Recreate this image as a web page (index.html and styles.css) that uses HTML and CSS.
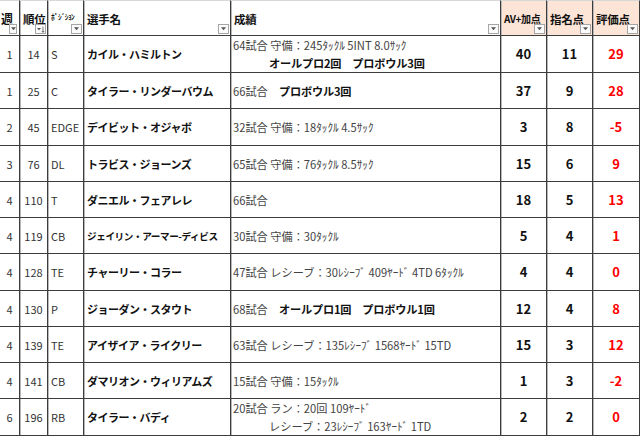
FILE: index.html
```html
<!DOCTYPE html>
<html lang="ja">
<head>
<meta charset="utf-8">
<link rel="stylesheet" href="styles.css">
</head>
<body>
<div class="sheet">
  <div class="c h first">週<span class="dd dd-narrow"><svg viewBox="0 0 6 4"><path d="M0 0H6L3 3.5Z"/></svg></span></div>
  <div class="c h">順位<span class="dd dd-sort"><svg viewBox="0 0 10 8"><path d="M0 2H5L2.5 5Z"/><path d="M7.5 0.5V7.5M6 5.8L7.5 7.5L9 5.8" fill="none" stroke="#333" stroke-width="0.8"/></svg></span></div>
  <div class="c h pos-h">ﾎﾟｼﾞｼｮﾝ<span class="dd"><svg viewBox="0 0 6 4"><path d="M0 0H6L3 3.5Z"/></svg></span></div>
  <div class="c h">選手名<span class="dd"><svg viewBox="0 0 6 4"><path d="M0 0H6L3 3.5Z"/></svg></span></div>
  <div class="c h">成績<span class="dd"><svg viewBox="0 0 6 4"><path d="M0 0H6L3 3.5Z"/></svg></span></div>
  <div class="c h peach small-h">AV+加点<span class="dd"><svg viewBox="0 0 6 4"><path d="M0 0H6L3 3.5Z"/></svg></span></div>
  <div class="c h peach">指名点<span class="dd"><svg viewBox="0 0 6 4"><path d="M0 0H6L3 3.5Z"/></svg></span></div>
  <div class="c h peach">評価点<span class="dd"><svg viewBox="0 0 6 4"><path d="M0 0H6L3 3.5Z"/></svg></span></div>

  <div class="c num first">1</div><div class="c num">14</div><div class="c pos">S</div><div class="c name">カイル・ハミルトン</div>
  <div class="c stat"><div>64試合 守備：245ﾀｯｸﾙ 5INT 8.0ｻｯｸ</div><div class="ind"><b>オールプロ2回　プロボウル3回</b></div></div>
  <div class="c big">40</div><div class="c big">11</div><div class="c big red">29</div>

  <div class="c num first">1</div><div class="c num">25</div><div class="c pos">C</div><div class="c name">タイラー・リンダーバウム</div>
  <div class="c stat"><div>66試合　<b>プロボウル3回</b></div></div>
  <div class="c big">37</div><div class="c big">9</div><div class="c big red">28</div>

  <div class="c num first">2</div><div class="c num">45</div><div class="c pos">EDGE</div><div class="c name">デイビット・オジャボ</div>
  <div class="c stat"><div>32試合 守備：18ﾀｯｸﾙ 4.5ｻｯｸ</div></div>
  <div class="c big">3</div><div class="c big">8</div><div class="c big red">-5</div>

  <div class="c num first">3</div><div class="c num">76</div><div class="c pos">DL</div><div class="c name">トラビス・ジョーンズ</div>
  <div class="c stat"><div>65試合 守備：76ﾀｯｸﾙ 8.5ｻｯｸ</div></div>
  <div class="c big">15</div><div class="c big">6</div><div class="c big red">9</div>

  <div class="c num first">4</div><div class="c num">110</div><div class="c pos">T</div><div class="c name">ダニエル・フェアレレ</div>
  <div class="c stat"><div>66試合</div></div>
  <div class="c big">18</div><div class="c big">5</div><div class="c big red">13</div>

  <div class="c num first">4</div><div class="c num">119</div><div class="c pos">CB</div><div class="c name name-small">ジェイリン・アーマー-ディビス</div>
  <div class="c stat"><div>30試合 守備：30ﾀｯｸﾙ</div></div>
  <div class="c big">5</div><div class="c big">4</div><div class="c big red">1</div>

  <div class="c num first">4</div><div class="c num">128</div><div class="c pos">TE</div><div class="c name">チャーリー・コラー</div>
  <div class="c stat"><div>47試合 レシーブ：30ﾚｼｰﾌﾞ 409ﾔｰﾄﾞ 4TD 6ﾀｯｸﾙ</div></div>
  <div class="c big">4</div><div class="c big">4</div><div class="c big red">0</div>

  <div class="c num first">4</div><div class="c num">130</div><div class="c pos">P</div><div class="c name">ジョーダン・スタウト</div>
  <div class="c stat"><div>68試合　<b>オールプロ1回　プロボウル1回</b></div></div>
  <div class="c big">12</div><div class="c big">4</div><div class="c big red">8</div>

  <div class="c num first">4</div><div class="c num">139</div><div class="c pos">TE</div><div class="c name">アイザイア・ライクリー</div>
  <div class="c stat"><div>63試合 レシーブ：135ﾚｼｰﾌﾞ 1568ﾔｰﾄﾞ 15TD</div></div>
  <div class="c big">15</div><div class="c big">3</div><div class="c big red">12</div>

  <div class="c num first">4</div><div class="c num">141</div><div class="c pos">CB</div><div class="c name">ダマリオン・ウィリアムズ</div>
  <div class="c stat"><div>15試合 守備：15ﾀｯｸﾙ</div></div>
  <div class="c big">1</div><div class="c big">3</div><div class="c big red">-2</div>

  <div class="c num first">6</div><div class="c num">196</div><div class="c pos">RB</div><div class="c name">タイラー・バディ</div>
  <div class="c stat"><div>20試合 ラン：20回 109ﾔｰﾄﾞ</div><div class="ind">レシーブ：23ﾚｼｰﾌﾞ 163ﾔｰﾄﾞ 1TD</div></div>
  <div class="c big">2</div><div class="c big">2</div><div class="c big red">0</div>
</div>
</body>
</html>
```

FILE: styles.css
```css
* { box-sizing: border-box; }
html, body { margin: 0; padding: 0; background: #fff; }
body {
  width: 640px;
  height: 436px;
  overflow: hidden;
  font-family: "Noto Sans CJK JP", "Liberation Sans", sans-serif;
  color: #222;
}
.sheet {
  display: grid;
  grid-template-columns: 20px 28px 36px 147px 270px 46px 46px 47px;
  grid-template-rows: 36px 37px 36px 37px 36px 36px 36px 37px 36px 36px 36px 37px;
  width: 640px;
}
.c {
  display: flex;
  align-items: center;
  border-right: 1px solid #3c3c3c;
  border-bottom: 1px solid #3c3c3c;
  box-shadow: inset 1px 0 0 #b8b8b8;
  overflow: hidden;
  white-space: nowrap;
  font-size: 11px;
  line-height: 18px;
}
.c.first { box-shadow: none; }
.h {
  position: relative;
  align-items: flex-start;
  padding: 9px 0 0 3px;
  font-weight: bold;
  font-size: 11.5px;
  color: #111;
  letter-spacing: -0.3px;
  border-top: 1px solid #d8d8d8;
}
.h.first { padding-left: 1px; font-size: 12px; }
.pos-h { font-size: 7.5px; letter-spacing: -0.6px; padding-top: 10px; line-height: 12px; }
.small-h { font-size: 10px; letter-spacing: -0.4px; }
.peach { background: #fce4d6; }
.dd {
  position: absolute;
  right: 1px;
  bottom: 1px;
  width: 11px;
  height: 10px;
  background: #fbfbfb;
  border: 1px solid #a6a6a6;
  display: flex;
  align-items: center;
  justify-content: center;
}
.dd svg { width: 5px; height: 4px; fill: #555; }
.dd-narrow { width: 8px; right: 2px; }
.dd-sort svg { width: 8px; height: 7px; }
.num { justify-content: center; color: #333; }
.pos { padding-left: 3px; color: #333; }
.name {
  padding-left: 3px;
  font-weight: bold;
  color: #111;
  letter-spacing: -0.5px;
}
.name-small { font-size: 9.6px; letter-spacing: -0.4px; }
.stat {
  flex-direction: column;
  justify-content: center;
  align-items: flex-start;
  padding-left: 2px;
  color: #444;
  font-size: 11.2px;
}
.stat b { color: #111; letter-spacing: -0.2px; }
.ind { padding-left: 36px; }
.big {
  justify-content: center;
  font-weight: bold;
  font-size: 13px;
  color: #111;
}
.red { color: #ff0000; }
```
